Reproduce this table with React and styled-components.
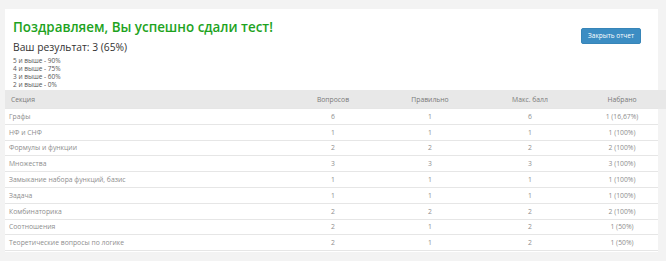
import React from "react";
import styled, { createGlobalStyle } from "styled-components";

const Global = createGlobalStyle`
  html, body { margin: 0; padding: 0; background: #f3f3f3; }
  body { font-family: "Open Sans", "Liberation Sans", sans-serif; }
`;

const Page = styled.div`
  padding: 9px 8px 0 5px;
`;

const Card = styled.div`
  background: #ffffff;
  padding-bottom: 1px;
`;

const Top = styled.div`
  display: flex;
  justify-content: space-between;
  align-items: flex-start;
  padding: 9px 17px 1px 8px;
`;

const Info = styled.div`
  display: flex;
  flex-direction: column;
`;

const Title = styled.h1`
  margin: 0;
  font-size: 13.4px;
  line-height: 18px;
  font-weight: 600;
  color: #1ea31e;
`;

const Result = styled.div`
  margin-top: 4px;
  font-size: 10.3px;
  line-height: 14px;
  color: #333;
`;

const Thresholds = styled.div`
  margin-top: 3px;
  display: flex;
  flex-direction: column;
`;

const Threshold = styled.span`
  font-size: 6.5px;
  line-height: 8px;
  color: #555;
`;

const CloseButton = styled.button`
  margin-top: 10px;
  width: 60px;
  height: 16px;
  padding: 0;
  border: 1px solid #3785b8;
  border-radius: 2px;
  background: #3c8dc3;
  color: #fff;
  font-family: "Open Sans", "Liberation Sans", sans-serif;
  font-size: 6.5px;
  line-height: 14px;
  cursor: pointer;
`;

const Table = styled.table`
  width: 100%;
  border-collapse: collapse;
  table-layout: fixed;
  font-size: 6.8px;
  color: #8e8e8e;
`;

const HeadRow = styled.tr`
  background: #e8e8e8;
`;

const Th = styled.th`
  height: 18px;
  padding: 0 ${(p) => (p.$left ? "6px" : "2px")};
  font-weight: 400;
  color: #7a7a7a;
  text-align: ${(p) => (p.$left ? "left" : "center")};
  ${(p) => (p.$last ? "box-shadow: 8px 0 0 #e8e8e8;" : "")}
`;

const Row = styled.tr`
  border-top: 1px solid #e6e6e6;
  &:last-child { border-bottom: 1px solid #e6e6e6; }
`;

const Td = styled.td`
  height: 14.8px;
  padding: 0 ${(p) => (p.$left ? "4px" : "2px")};
  text-align: ${(p) => (p.$left ? "left" : "center")};
  white-space: nowrap;
`;

const rows = [
  ["Графы", 6, 1, 6, "1 (16,67%)"],
  ["НФ и СНФ", 1, 1, 1, "1 (100%)"],
  ["Формулы и функции", 2, 2, 2, "2 (100%)"],
  ["Множества", 3, 3, 3, "3 (100%)"],
  ["Замыкание набора функций, базис", 1, 1, 1, "1 (100%)"],
  ["Задача", 1, 1, 1, "1 (100%)"],
  ["Комбинаторика", 2, 2, 2, "2 (100%)"],
  ["Соотношения", 2, 1, 2, "1 (50%)"],
  ["Теоретические вопросы по логике", 2, 1, 2, "1 (50%)"],
];

export default function App() {
  return (
    <Page>
      <Global />
      <Card>
        <Top>
          <Info>
            <Title>Поздравляем, Вы успешно сдали тест!</Title>
            <Result>Ваш результат: 3 (65%)</Result>
            <Thresholds>
              <Threshold>5 и выше - 90%</Threshold>
              <Threshold>4 и выше - 75%</Threshold>
              <Threshold>3 и выше - 60%</Threshold>
              <Threshold>2 и выше - 0%</Threshold>
            </Thresholds>
          </Info>
          <CloseButton>Закрыть отчет</CloseButton>
        </Top>
        <Table>
          <colgroup>
            <col style={{ width: 275 }} />
            <col style={{ width: 106 }} />
            <col style={{ width: 88 }} />
            <col style={{ width: 112 }} />
            <col style={{ width: 72 }} />
          </colgroup>
          <thead>
            <HeadRow>
              <Th $left>Секция</Th>
              <Th>Вопросов</Th>
              <Th>Правильно</Th>
              <Th>Макс. балл</Th>
              <Th $last>Набрано</Th>
            </HeadRow>
          </thead>
          <tbody>
            {rows.map((r) => (
              <Row key={r[0]}>
                <Td $left>{r[0]}</Td>
                <Td>{r[1]}</Td>
                <Td>{r[2]}</Td>
                <Td>{r[3]}</Td>
                <Td>{r[4]}</Td>
              </Row>
            ))}
          </tbody>
        </Table>
      </Card>
    </Page>
  );
}
